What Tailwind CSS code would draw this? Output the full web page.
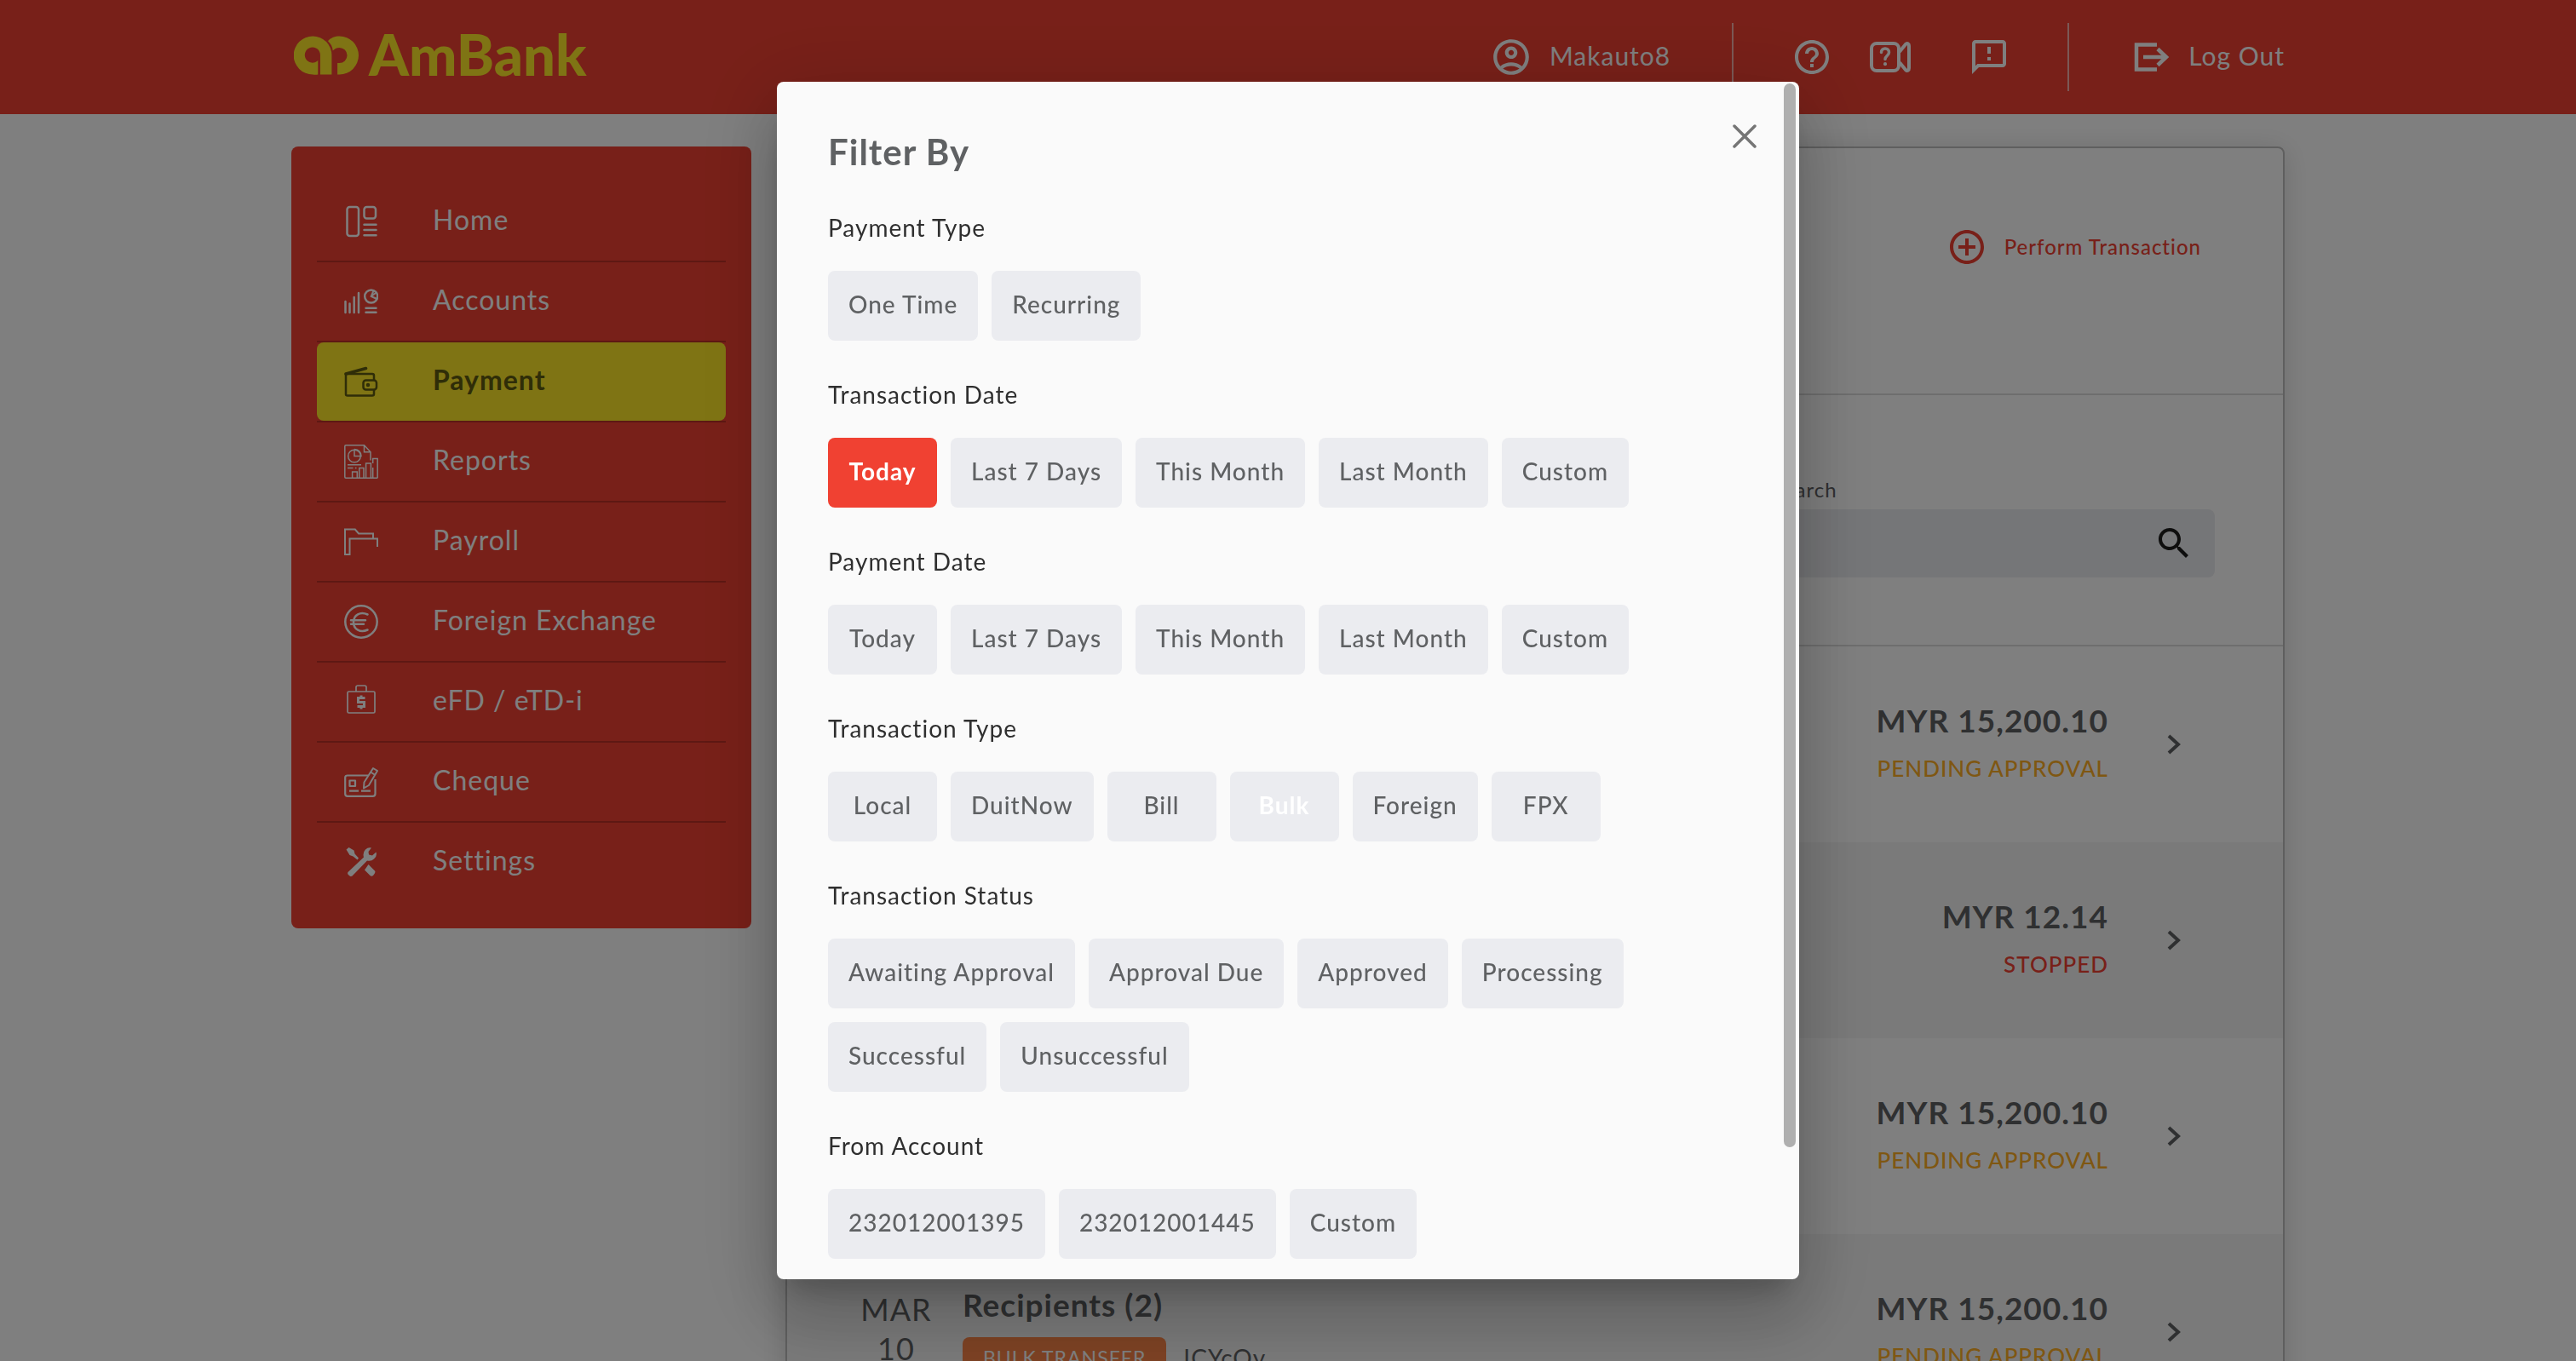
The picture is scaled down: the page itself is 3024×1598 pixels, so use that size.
<!DOCTYPE html>
<html lang="en">
<head>
<meta charset="utf-8">
<title>AmBank - Payment</title>
<script src="https://cdn.jsdelivr.net/npm/@tailwindcss/browser@4"></script>
</head>
<body class="h-screen overflow-hidden bg-white font-['Lato',sans-serif] tracking-[1px] text-[#5f6163]">

<header class="bg-[#f04132] text-white">
  <div class="mx-auto flex h-[134px] w-full max-w-[2340px] items-center justify-between">
    <a href="#" class="flex items-center gap-3 pb-1 pl-[3px] text-[#ffe928]">
      <svg class="h-[46px] w-[76px]" viewBox="76 127 226 136" fill="currentColor"><path d="M160 262Q151 263 142 262A67 67 0 0 1 142 128A66 66 0 0 1 208 195V262H168V195A27 27 0 1 0 160 213Z"/><path d="M228 262V222H235A27 27 0 0 0 235 168C225 168 217 173 212 179C211 165 205 154 195 145C205 133 220 128 235 128A67 67 0 0 1 235 262Z"/></svg>
      <span class="pb-1 text-[67px] leading-[64px] font-black tracking-normal">AmBank</span>
    </a>
    <nav class="flex items-center text-[30px] leading-[34px]">
      <a href="#" class="flex items-center gap-5">
        <svg class="size-[50px]" viewBox="0 0 24 24" fill="currentColor"><path d="M12 2C6.480 2 2 6.480 2 12s4.480 10 10 10 10-4.480 10-10S17.520 2 12 2zM7.350 18.500C8.660 17.560 10.260 17 12 17s3.340.56 4.650 1.500C15.340 19.440 13.740 20 12 20s-3.340-.56-4.650-1.500zm10.790-1.380C16.450 15.800 14.320 15 12 15s-4.450.8-6.140 2.120C4.700 15.730 4 13.950 4 12c0-4.420 3.580-8 8-8s8 3.580 8 8c0 1.950-.7 3.730-1.860 5.120z"/><path d="M12 6c-1.930 0-3.500 1.570-3.500 3.500S10.070 13 12 13s3.500-1.570 3.500-3.500S13.930 6 12 6zm0 5c-.83 0-1.500-.67-1.500-1.500S11.170 8 12 8s1.500.67 1.500 1.500S12.830 11 12 11z"/></svg>
        <span class="pb-1">Makauto8</span>
      </a>
      <span class="mr-[68px] ml-[72px] h-20 w-0.5 bg-white/60"></span>
      <button aria-label="Help"><svg class="size-12" viewBox="0 0 24 24" fill="currentColor"><path d="M11 18h2v-2h-2v2zm1-16C6.480 2 2 6.480 2 12s4.480 10 10 10 10-4.480 10-10S17.520 2 12 2zm0 18c-4.410 0-8-3.590-8-8s3.590-8 8-8 8 3.590 8 8-3.590 8-8 8zm0-14c-2.210 0-4 1.790-4 4h2c0-1.100.9-2 2-2s2 .9 2 2c0 2-3 1.750-3 5h2c0-2.250 3-2.500 3-5 0-2.210-1.790-4-4-4z"/></svg></button>
      <button aria-label="Video guide" class="ml-11"><svg class="h-9 w-12" viewBox="0 0 48 36" fill="none" stroke="currentColor" stroke-width="4" stroke-linejoin="round" stroke-linecap="round"><rect x="2" y="2" width="32" height="32" rx="6"/><path d="M35.500 11L42 3Q43.500 1.500 45 2.500Q46 3 46 5V31Q46 33 45 33.500Q43.500 34.500 42 33L35.500 25"/><path d="M13.500 12.500C13.500 6.500 22.500 6.500 22.500 12.500C22.500 16.500 18 16.500 18 20.500" stroke-width="3.500"/><path d="M18 26V26.200"/></svg></button>
      <button aria-label="Feedback" class="ml-[68px]"><svg class="size-12" viewBox="0 0 24 24" fill="currentColor"><path d="M20 2H4c-1.100 0-1.990.9-1.990 2L2 22l4-4h14c1.100 0 2-.9 2-2V4c0-1.100-.9-2-2-2zm0 14H5.170l-.59.590-.58.580V4h16v12zm-9-4h2v2h-2zm0-6h2v4h-2z"/></svg></button>
      <span class="mr-[76px] ml-[68px] h-20 w-0.5 bg-white/60"></span>
      <a href="#" class="flex items-center gap-[22px]">
        <svg class="h-[34px] w-[42px]" viewBox="0 0 42 34" fill="none" stroke="currentColor" stroke-width="4.500"><path d="M27 2.500H3V31.500H27"/><path d="M11 17H37"/><path d="M28 7.500L38 17L28 26.500"/></svg>
        <span class="pb-1">Log Out</span>
      </a>
    </nav>
  </div>
</header>

<main class="mx-auto mt-[38px] flex w-full max-w-[2340px] items-start gap-10">
  <nav class="w-[540px] shrink-0 rounded-lg bg-[#f04132] px-[30px] pt-[42px] pb-8 text-[32px] leading-[40px] text-white">
    <ul>
      <li class="border-b-2 border-[#bc3026]"><a href="#" class="flex h-[92px] items-center gap-16 pl-8">
        <svg class="size-10" viewBox="0 0 40 40" fill="none" stroke="currentColor" stroke-width="2.500" stroke-linecap="round"><rect x="3.500" y="3" width="13.500" height="34" rx="3"/><rect x="23.500" y="3" width="13.500" height="13.500" rx="3"/><path d="M23.500 23.700H37.500M23.500 30H37.500M23.500 36.300H37.500"/></svg><span class="pb-1">Home</span></a></li>
      <li class="border-b-2 border-[#bc3026]"><a href="#" class="flex h-[92px] items-center gap-16 pl-8">
        <svg class="size-10" viewBox="0 0 40 40" fill="none" stroke="currentColor" stroke-width="2.500" stroke-linecap="round"><path d="M1.500 20V33M6.500 22.500V33M11.700 15V33M17 10V33M25.500 27.700H37.500M25.500 32.700H37.500"/><circle cx="31.700" cy="14" r="7.500"/><path d="M34.500 7.500L31.700 14L38.500 17M31.700 14L37 10" stroke-width="2"/></svg><span class="pb-1">Accounts</span></a></li>
      <li class="border-b-2 border-[#bc3026]"><a href="#" class="flex h-[92px] items-center gap-16 rounded-lg bg-[#ffe928] pl-8 font-bold text-[#5f5a10]">
        <svg class="size-10" viewBox="0 0 40 40" fill="none" stroke="currentColor" stroke-width="2.500" stroke-linecap="round" stroke-linejoin="round"><path d="M35 18V13Q35 11 33 11H2V35Q2 36.500 4 36.500H33Q35 36.500 35 34.500V30"/><path d="M2 11L25.500 4.500" stroke-width="3.500"/><rect x="22.500" y="18.500" width="15.500" height="11" rx="3"/><circle cx="28" cy="24" r="1"/></svg><span class="pb-1">Payment</span></a></li>
      <li class="border-b-2 border-[#bc3026]"><a href="#" class="flex h-[92px] items-center gap-16 pl-8">
        <svg class="size-10" viewBox="0 0 40 40" fill="none" stroke="currentColor" stroke-width="1.500"><path d="M39.200 39.200H2Q.8 39.200 .8 38V2Q.8 .8 2 .8H23.500L31 8.700V18.500M23.500 .8V8.700H31M9.600 39V32H15.300V39M17.800 39V27.500H23V39M25.600 39V22H31.400V39M33.700 39V27M33.700 22V16.500H39.200V39.200M4 23.700H20M4 27.500H10.500M12.800 27.500H14.500"/><circle cx="12" cy="13.500" r="7.300"/><path d="M12 5.500V13.500H20Q19.500 6 12 5.500"/></svg><span class="pb-1">Reports</span></a></li>
      <li class="border-b-2 border-[#bc3026]"><a href="#" class="flex h-[92px] items-center gap-16 pl-8">
        <svg class="size-10" viewBox="0 0 40 40" fill="none" stroke="currentColor" stroke-width="2"><path d="M34 16V10.500H17L12.800 5.500H1V35H6.500V16.500H39V26"/></svg><span class="pb-1">Payroll</span></a></li>
      <li class="border-b-2 border-[#bc3026]"><a href="#" class="flex h-[92px] items-center gap-16 pl-8">
        <svg class="size-10" viewBox="0 0 40 40" fill="none" stroke="currentColor" stroke-width="2.500" stroke-linecap="round"><circle cx="20" cy="20" r="18.700"/><path d="M27.500 11.500C19 7.500 11 12 11 20.500C11 29 19 33.500 27.500 29.500M8 18.200H25M8 22.800H23"/></svg><span class="pb-1">Foreign Exchange</span></a></li>
      <li class="border-b-2 border-[#bc3026]"><a href="#" class="flex h-[92px] items-center gap-16 pl-8">
        <svg class="size-10" viewBox="0 0 40 40" fill="none" stroke="currentColor" stroke-width="1.700"><rect x="4" y="8" width="32" height="25" rx="1.500"/><path d="M14 8V3Q14 1 16 1H24Q26 1 26 3V8"/><path d="M24.500 15.500H16.500V20.500H23.500V25.500H15.500M20 12.500V15.500M20 25.500V28.500" stroke-width="3"/></svg><span class="pb-1">eFD / eTD-i</span></a></li>
      <li class="border-b-2 border-[#bc3026]"><a href="#" class="flex h-[92px] items-center gap-16 pl-8">
        <svg class="size-10" viewBox="0 0 40 40" fill="none" stroke="currentColor" stroke-width="2.200" stroke-linejoin="round"><path d="M28 12.500H4Q1.200 12.500 1.200 15V34Q1.200 36.800 4 36.800H33.500Q36.500 36.800 36.500 34V17"/><rect x="6.500" y="18.500" width="6.500" height="6.500"/><path d="M6 30.700H17M20 30.700H31"/><path d="M34 4L39 7L29 24L23 27.500L23.500 20.500ZM31 8.500L36.500 12" stroke-width="2"/></svg><span class="pb-1">Cheque</span></a></li>
      <li><a href="#" class="flex h-[92px] items-center gap-16 pl-8">
        <svg class="size-10" viewBox="0 0 40 40" fill="currentColor"><path d="M2.500 5.500L5.500 3L11.500 6.500L12.500 10.500L17 15.500L15.500 17.500L10.500 13.500L6.500 12Z"/><path d="M28.500 23L36 30.500Q37 32 35.500 34L34 36Q32 37.500 30.500 36L24 29.500Z"/><path d="M4.500 32L23 14.500Q21.500 9 25 5.500Q28 2.500 32 3.500L28.500 8L29 11.500L33 12.500L37.500 8.500Q39 13 35 16.500Q32 19.500 27 18.500L9.500 36.500Q7.500 37.500 6 36L4.800 35Q3.500 33.500 4.500 32Z"/></svg><span class="pb-1">Settings</span></a></li>
    </ul>
  </nav>

  <section class="min-w-0 flex-1 rounded-lg border-2 border-[#bebebe] bg-white shadow-[0_4px_32px_rgba(0,0,0,0.15)]">
    <div class="flex h-[290px] items-start justify-end border-b-2 border-[#dcdcdc] pt-[92px] pr-[96px]">
      <button class="flex h-12 items-center gap-5 text-[24px] leading-[32px] font-medium text-[#f04132]">
        <svg class="size-12" viewBox="0 0 24 24" fill="currentColor"><path d="M13 7h-2v4H7v2h4v4h2v-4h4v-2h-4V7zm-1-5C6.480 2 2 6.480 2 12s4.480 10 10 10 10-4.480 10-10S17.520 2 12 2zm0 18c-4.410 0-8-3.590-8-8s3.590-8 8-8 8 3.590 8 8-3.590 8-8 8z"/></svg>
        Perform Transaction
      </button>
    </div>
    <div class="flex h-[295px] justify-end border-b-2 border-[#dcdcdc] pt-[96px] pr-20">
      <div class="flex w-[520px] flex-col gap-2">
        <label for="search" class="text-[24px] leading-[30px]">Search</label>
        <div class="flex h-20 items-center rounded-lg bg-[#ebecf0] pr-6">
          <input id="search" type="text" class="min-w-0 flex-1 self-stretch bg-transparent px-6 outline-none">
          <svg class="size-12 text-[#1c1c1c]" viewBox="0 0 24 24" fill="currentColor"><path d="M15.500 14h-.79l-.28-.27C15.410 12.590 16 11.110 16 9.500 16 5.910 13.090 3 9.500 3S3 5.910 3 9.500 5.910 16 9.500 16c1.610 0 3.090-.59 4.230-1.570l.27.28v.79l5 4.990L20.490 19l-4.990-5zm-6 0C7.010 14 5 11.990 5 9.500S7.010 5 9.500 5 14 7.010 14 9.500 11.990 14 9.500 14z"/></svg>
        </div>
      </div>
    </div>
    <ul>
      <li class="flex h-[230px] items-center justify-end gap-[69px] pr-[120px]">
        <div class="text-right"><p class="text-[37px] leading-[56px] font-bold">MYR 15,200.10</p><p class="text-[26px] leading-[56px] font-medium text-[#ffae24]">PENDING APPROVAL</p></div>
        <svg class="h-6 w-4" viewBox="0 0 16 24" fill="none" stroke="currentColor" stroke-width="4"><path d="M2 2L13 12L2 22"/></svg>
      </li>
      <li class="flex h-[230px] items-center justify-end gap-[69px] bg-[#f5f5f5] pr-[120px]">
        <div class="text-right"><p class="text-[37px] leading-[56px] font-bold">MYR 12.14</p><p class="text-[26px] leading-[56px] font-medium text-[#f04132]">STOPPED</p></div>
        <svg class="h-6 w-4" viewBox="0 0 16 24" fill="none" stroke="currentColor" stroke-width="4"><path d="M2 2L13 12L2 22"/></svg>
      </li>
      <li class="flex h-[230px] items-center justify-end gap-[69px] pr-[120px]">
        <div class="text-right"><p class="text-[37px] leading-[56px] font-bold">MYR 15,200.10</p><p class="text-[26px] leading-[56px] font-medium text-[#ffae24]">PENDING APPROVAL</p></div>
        <svg class="h-6 w-4" viewBox="0 0 16 24" fill="none" stroke="currentColor" stroke-width="4"><path d="M2 2L13 12L2 22"/></svg>
      </li>
      <li class="flex h-[230px] items-center gap-[69px] bg-[#f5f5f5] pr-[120px] pl-[86px]">
        <div class="flex flex-1 items-start gap-9">
          <p class="w-[84px] pt-1 text-center text-[36px] leading-[46px]">MAR<br>10</p>
          <div>
            <p class="text-[37px] leading-[44px] font-bold">Recipients (2)</p>
            <p class="mt-4 flex items-center gap-5 text-[28px] leading-[48px]"><span class="rounded-lg bg-[#fb8548] px-6 text-[23px] text-white">BULK TRANSFER</span>ICYcOy</p>
          </div>
        </div>
        <div class="text-right"><p class="text-[37px] leading-[56px] font-bold">MYR 15,200.10</p><p class="text-[26px] leading-[56px] font-medium text-[#ffae24]">PENDING APPROVAL</p></div>
        <svg class="h-6 w-4" viewBox="0 0 16 24" fill="none" stroke="currentColor" stroke-width="4"><path d="M2 2L13 12L2 22"/></svg>
      </li>
    </ul>
  </section>
</main>

<div class="fixed inset-0 flex items-center justify-center bg-black/50">
  <div role="dialog" aria-labelledby="filter-title" class="relative h-[88vh] w-[1200px] overflow-hidden rounded-lg bg-[#fafafa] px-[60px] pt-[60px] shadow-[0_22px_30px_-14px_rgba(0,0,0,0.2),0_48px_76px_6px_rgba(0,0,0,0.14),0_18px_92px_16px_rgba(0,0,0,0.12)]">
    <button aria-label="Close" class="absolute top-[50px] right-[50px]"><svg class="size-7" viewBox="0 0 28 28" fill="none" stroke="#757575" stroke-width="3.500" stroke-linecap="round"><path d="M2 2L26 26M26 2L2 26"/></svg></button>
    <span class="absolute top-0.5 right-1 h-[1249px] w-3.5 rounded-full bg-[#afafaf]"></span>
    <h2 id="filter-title" class="text-[42px] leading-[44px] font-bold">Filter By</h2>
    <div class="mt-[50px] flex flex-col gap-[46px] text-[28px] leading-[34px]">
      <section>
        <h3 class="text-[#2f2f2f]">Payment Type</h3>
        <div class="mt-[34px] flex flex-wrap gap-4 font-medium">
          <button class="h-[82px] min-w-32 rounded-lg bg-[#ebecf0] px-6 pb-[3px]">One Time</button>
          <button class="h-[82px] min-w-32 rounded-lg bg-[#ebecf0] px-6 pb-[3px]">Recurring</button>
        </div>
      </section>
      <section>
        <h3 class="text-[#2f2f2f]">Transaction Date</h3>
        <div class="mt-[34px] flex flex-wrap gap-4 font-medium">
          <button class="h-[82px] min-w-32 rounded-lg bg-[#f04132] px-6 pb-[3px] font-bold text-white">Today</button>
          <button class="h-[82px] min-w-32 rounded-lg bg-[#ebecf0] px-6 pb-[3px]">Last 7 Days</button>
          <button class="h-[82px] min-w-32 rounded-lg bg-[#ebecf0] px-6 pb-[3px]">This Month</button>
          <button class="h-[82px] min-w-32 rounded-lg bg-[#ebecf0] px-6 pb-[3px]">Last Month</button>
          <button class="h-[82px] min-w-32 rounded-lg bg-[#ebecf0] px-6 pb-[3px]">Custom</button>
        </div>
      </section>
      <section>
        <h3 class="text-[#2f2f2f]">Payment Date</h3>
        <div class="mt-[34px] flex flex-wrap gap-4 font-medium">
          <button class="h-[82px] min-w-32 rounded-lg bg-[#ebecf0] px-6 pb-[3px]">Today</button>
          <button class="h-[82px] min-w-32 rounded-lg bg-[#ebecf0] px-6 pb-[3px]">Last 7 Days</button>
          <button class="h-[82px] min-w-32 rounded-lg bg-[#ebecf0] px-6 pb-[3px]">This Month</button>
          <button class="h-[82px] min-w-32 rounded-lg bg-[#ebecf0] px-6 pb-[3px]">Last Month</button>
          <button class="h-[82px] min-w-32 rounded-lg bg-[#ebecf0] px-6 pb-[3px]">Custom</button>
        </div>
      </section>
      <section>
        <h3 class="text-[#2f2f2f]">Transaction Type</h3>
        <div class="mt-[34px] flex flex-wrap gap-4 font-medium">
          <button class="h-[82px] min-w-32 rounded-lg bg-[#ebecf0] px-6 pb-[3px]">Local</button>
          <button class="h-[82px] min-w-32 rounded-lg bg-[#ebecf0] px-6 pb-[3px]">DuitNow</button>
          <button class="h-[82px] min-w-32 rounded-lg bg-[#ebecf0] px-6 pb-[3px]">Bill</button>
          <button class="h-[82px] min-w-32 rounded-lg bg-[#ebecf0] px-6 pb-[3px] font-bold text-white">Bulk</button>
          <button class="h-[82px] min-w-32 rounded-lg bg-[#ebecf0] px-6 pb-[3px]">Foreign</button>
          <button class="h-[82px] min-w-32 rounded-lg bg-[#ebecf0] px-6 pb-[3px]">FPX</button>
        </div>
      </section>
      <section>
        <h3 class="text-[#2f2f2f]">Transaction Status</h3>
        <div class="mt-[34px] flex flex-wrap gap-4 pr-[60px] font-medium">
          <button class="h-[82px] min-w-32 rounded-lg bg-[#ebecf0] px-6 pb-[3px]">Awaiting Approval</button>
          <button class="h-[82px] min-w-32 rounded-lg bg-[#ebecf0] px-6 pb-[3px]">Approval Due</button>
          <button class="h-[82px] min-w-32 rounded-lg bg-[#ebecf0] px-6 pb-[3px]">Approved</button>
          <button class="h-[82px] min-w-32 rounded-lg bg-[#ebecf0] px-6 pb-[3px]">Processing</button>
          <button class="h-[82px] min-w-32 rounded-lg bg-[#ebecf0] px-6 pb-[3px]">Successful</button>
          <button class="h-[82px] min-w-32 rounded-lg bg-[#ebecf0] px-6 pb-[3px]">Unsuccessful</button>
        </div>
      </section>
      <section>
        <h3 class="text-[#2f2f2f]">From Account</h3>
        <div class="mt-[34px] flex flex-wrap gap-4 font-medium">
          <button class="h-[82px] min-w-32 rounded-lg bg-[#ebecf0] px-6 pb-[3px]">232012001395</button>
          <button class="h-[82px] min-w-32 rounded-lg bg-[#ebecf0] px-6 pb-[3px]">232012001445</button>
          <button class="h-[82px] min-w-32 rounded-lg bg-[#ebecf0] px-6 pb-[3px]">Custom</button>
        </div>
      </section>
    </div>
  </div>
</div>
</body>
</html>
